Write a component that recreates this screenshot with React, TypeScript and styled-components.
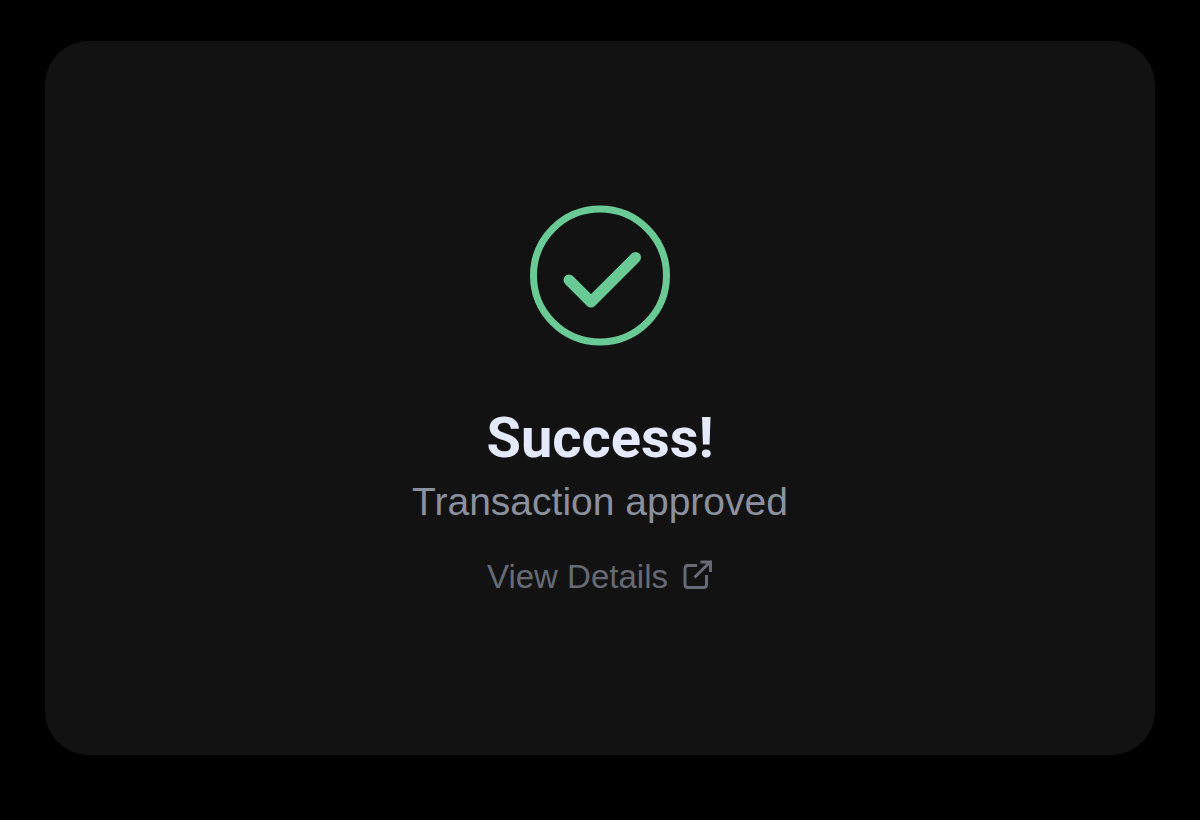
import React from "react";
import styled, { createGlobalStyle } from "styled-components";

const GlobalStyle = createGlobalStyle`
  * { box-sizing: border-box; }
  body {
    margin: 0;
    background: #000000;
    font-family: "Liberation Sans", Arial, sans-serif;
  }
`;

const Page = styled.main`
  display: flex;
  min-height: 100vh;
  padding: 41px 45px 65px;
`;

const Card = styled.section`
  flex: 1;
  display: flex;
  flex-direction: column;
  align-items: center;
  padding: 164px 24px 120px;
  border-radius: 44px;
  background: #121212;
`;

const StatusIcon = styled.svg`
  display: block;
  width: 142px;
  height: 142px;
  margin-bottom: 59px;
  color: #69ca95;
`;

const Title = styled.h1`
  margin: 0;
  font-family: Roboto, "Liberation Sans", sans-serif;
  font-size: 56px;
  font-weight: 700;
  line-height: 64px;
  color: #e4e9fd;
`;

const Message = styled.p`
  margin: 8px 0 27px;
  font-size: 39px;
  line-height: 48px;
  color: #8b909e;
`;

const DetailsLink = styled.a`
  display: flex;
  align-items: center;
  gap: 15px;
  font-size: 33px;
  line-height: 48px;
  color: #656a75;
  text-decoration: none;
`;

const LinkIcon = styled.svg`
  display: block;
  width: 30px;
  height: 30px;
  margin-bottom: 4px;
`;

export default function App() {
  return (
    <>
      <GlobalStyle />
      <Page>
        <Card>
          <StatusIcon viewBox="0 0 142 142" fill="none" stroke="currentColor" aria-hidden="true">
            <circle cx="71" cy="70.5" r="66.5" strokeWidth="7" />
            <path
              d="M40 75 L62 97 L106.500 52.500"
              strokeWidth="11"
              strokeLinecap="round"
              strokeLinejoin="round"
            />
          </StatusIcon>
          <Title>Success!</Title>
          <Message>Transaction approved</Message>
          <DetailsLink href="#details">
            View Details
            <LinkIcon viewBox="0 0 30 30" fill="none" stroke="currentColor" strokeWidth="3" aria-hidden="true">
              <path d="M14 5.500H5Q2 5.500 2 8.500V24.500Q2 27.500 5 27.500H20.500Q23.500 27.500 23.500 24.500V15" />
              <path d="M11.500 17.500L27 2M17.500 2H27.500V12" />
            </LinkIcon>
          </DetailsLink>
        </Card>
      </Page>
    </>
  );
}
